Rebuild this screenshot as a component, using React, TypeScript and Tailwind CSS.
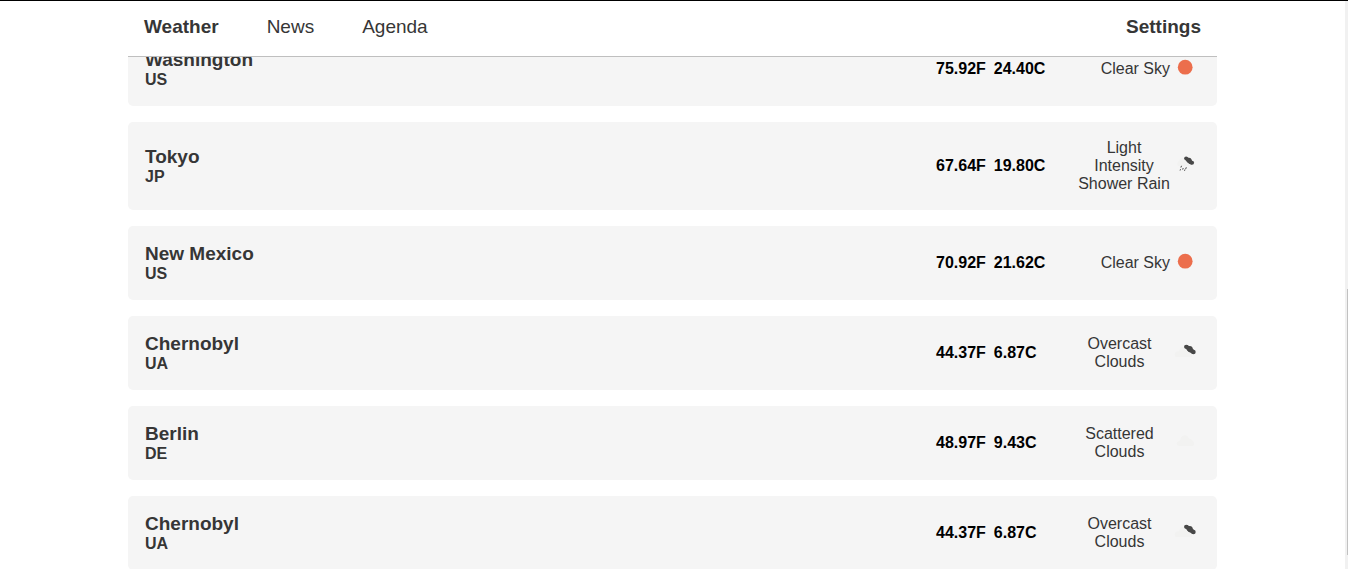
type IconKind = 'sun' | 'shower' | 'overcast' | 'scattered';

interface City {
  name: string;
  country: string;
  f: string;
  c: string;
  sky: string;
  icon: IconKind;
}

const cities: City[] = [
  { name: 'Washington', country: 'US', f: '75.92F', c: '24.40C', sky: 'Clear Sky', icon: 'sun' },
  { name: 'Tokyo', country: 'JP', f: '67.64F', c: '19.80C', sky: 'Light Intensity Shower Rain', icon: 'shower' },
  { name: 'New Mexico', country: 'US', f: '70.92F', c: '21.62C', sky: 'Clear Sky', icon: 'sun' },
  { name: 'Chernobyl', country: 'UA', f: '44.37F', c: '6.87C', sky: 'Overcast Clouds', icon: 'overcast' },
  { name: 'Berlin', country: 'DE', f: '48.97F', c: '9.43C', sky: 'Scattered Clouds', icon: 'scattered' },
  { name: 'Chernobyl', country: 'UA', f: '44.37F', c: '6.87C', sky: 'Overcast Clouds', icon: 'overcast' },
];

function WeatherIcon({ kind }: { kind: IconKind }) {
  return (
    <svg viewBox="0 0 30 30" className="mb-1 size-[30px] shrink-0" aria-hidden="true">
      {kind === 'sun' && <circle cx="15.2" cy="15.2" r="7.4" fill="#ec6e4c" />}
      {kind === 'overcast' && (
        <>
          <path d="M6 21a3 3 0 0 1 0-5l3-1 2-4h3l4 5 4 2v3z" fill="#f2f2f1" />
          <g fill="#484848">
            <ellipse cx="16.3" cy="10.8" rx="2.3" ry="2" />
            <circle cx="19.8" cy="12.9" r="2.8" />
            <ellipse cx="23.4" cy="16" rx="2.3" ry="2.2" />
            <path d="M17 9l2 1 3 2 2 2-1 4-4-2-4-4z" />
          </g>
        </>
      )}
      {kind === 'shower' && (
        <>
          <path d="M8 17a3 3 0 0 1 0-4l3-4h3l3 4 4 2v2z" fill="#f2f2f1" />
          <g fill="#484848">
            <ellipse cx="16.1" cy="9.4" rx="2" ry="1.8" />
            <circle cx="19" cy="11.3" r="2.5" />
            <ellipse cx="22" cy="13.8" rx="2.1" ry="2" />
            <path d="M16.500 8l2 .8 3 2 1 2-1 3-3-1.500-3-3z" />
          </g>
          <path
            d="M11.500 16.800l-.6 1.700M10.500 20.200l-.4 1.300M13.200 19l-.5 1.600M15 20.400l-.5 1.400M16.300 18.300l-.6 1.700"
            stroke="#484848"
            strokeWidth="1"
          />
        </>
      )}
      {kind === 'scattered' && (
        <path d="M8.500 20a2.500 2.500 0 0 1 0-4.800l1.700-.7c.3-3 2.300-5.300 4.600-5.300 2 0 3.600 1.300 4.200 3.200 2.700.4 4.700 2.600 5 4.800a2.300 2.300 0 0 1-2 2.800z" fill="#f2f2f1" />
      )}
    </svg>
  );
}

function CityCard({ city }: { city: City }) {
  return (
    <li className="flex items-center rounded-[5px] bg-[#f5f5f5] p-[17px]">
      <div className="flex-1 font-bold">
        <h2 className="text-[19px] leading-[22px]">{city.name}</h2>
        <p>{city.country}</p>
      </div>
      <div className="flex w-[133px] gap-2 font-bold text-black">
        <span>{city.f}</span>
        <span>{city.c}</span>
      </div>
      <div className="flex w-[131px] items-center justify-end">
        <p className={city.icon === 'shower' ? 'w-[92px] text-center' : 'max-w-[101px] text-center'}>{city.sky}</p>
        <WeatherIcon kind={city.icon} />
      </div>
    </li>
  );
}

export default function App() {
  return (
    <div className="flex h-screen overflow-hidden border-t border-black bg-white font-['Liberation_Sans',Arial,sans-serif] text-base leading-[18px] text-[#363636]">
      <div className="min-w-0 flex-1 px-32">
        <header className="relative z-10 border-b border-[#bfbfbf] bg-white px-4 pt-[15px] pb-[18px] text-[19px] leading-[22px]">
          <nav className="flex gap-12">
            <a href="#weather" className="font-bold">Weather</a>
            <a href="#news">News</a>
            <a href="#agenda">Agenda</a>
            <a href="#settings" className="ml-auto font-bold">Settings</a>
          </nav>
        </header>
        <main className="-mt-[25px]">
          <ul className="flex flex-col gap-4">
            {cities.map((city, i) => (
              <CityCard key={i} city={city} />
            ))}
          </ul>
        </main>
      </div>
      <div className="flex w-[3px] flex-col items-end justify-end bg-[#f1f1f1] pb-[14px]">
        <div className="h-[48%] w-px bg-[#c1c1c1]" />
      </div>
    </div>
  );
}
